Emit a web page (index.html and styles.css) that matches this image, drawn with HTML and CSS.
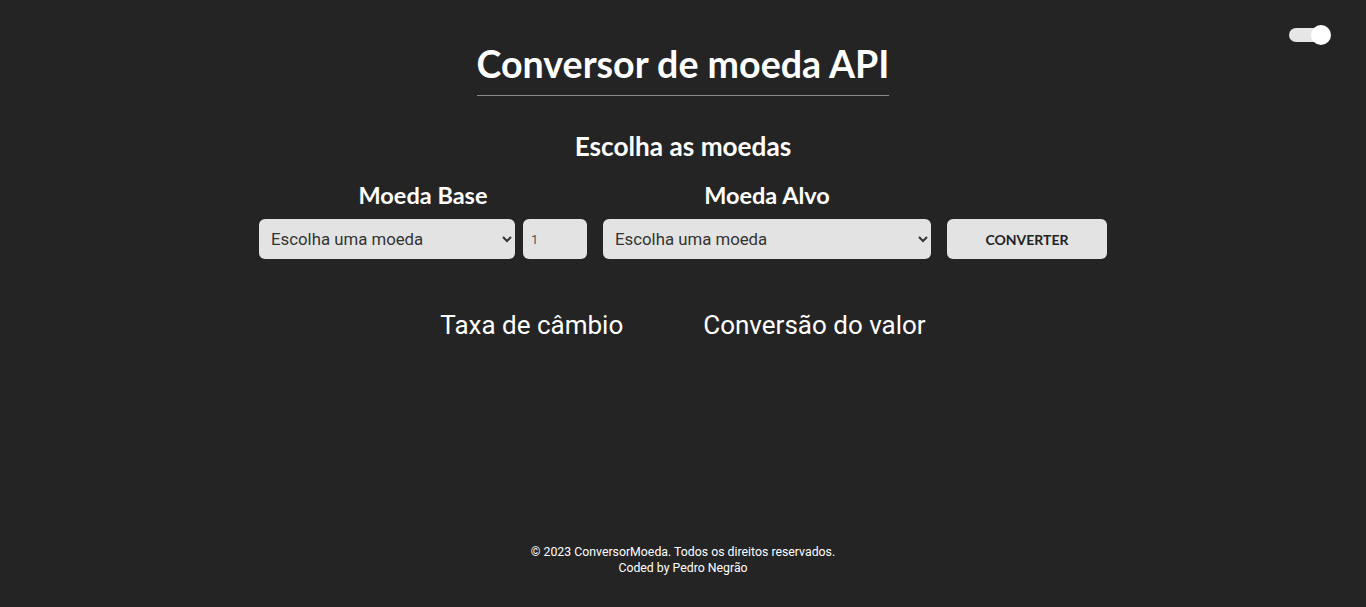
FILE: index.html
```html
<!DOCTYPE html>
<html lang="pt-BR">
<head>
<meta charset="utf-8">
<title>Conversor de moeda API</title>
<link rel="stylesheet" href="styles.css">
</head>
<body>
<div class="page">
  <div class="toggle-bar">
    <label class="toggle"><span class="track"></span><span class="knob"></span></label>
  </div>
  <header class="header">
    <h1 class="title">Conversor de moeda API</h1>
  </header>
  <main class="main">
    <h2 class="subtitle">Escolha as moedas</h2>
    <div class="form">
      <div class="group">
        <h3 class="label">Moeda Base</h3>
        <div class="row">
          <select class="select select-base"><option>Escolha uma moeda</option></select>
          <input class="amount" type="number" value="1">
        </div>
      </div>
      <div class="group">
        <h3 class="label">Moeda Alvo</h3>
        <div class="row">
          <select class="select select-target"><option>Escolha uma moeda</option></select>
        </div>
      </div>
      <div class="group group-btn">
        <button class="btn">CONVERTER</button>
      </div>
    </div>
    <div class="results">
      <p class="result">Taxa de câmbio</p>
      <p class="result">Conversão do valor</p>
    </div>
  </main>
  <footer class="footer">
    <p>© 2023 ConversorMoeda. Todos os direitos reservados.</p>
    <p>Coded by Pedro Negrão</p>
  </footer>
</div>
</body>
</html>
```
FILE: styles.css
```css
* { box-sizing: border-box; }
html, body { margin: 0; padding: 0; }
body {
  background: #242424;
  color: #fff;
  font-family: Roboto, "Liberation Sans", sans-serif;
  height: 607px;
  overflow: hidden;
}
.page {
  display: flex;
  flex-direction: column;
  align-items: center;
  height: 607px;
  position: relative;
}
.toggle-bar {
  position: absolute;
  top: 25px;
  right: 35px;
}
.toggle {
  display: block;
  position: relative;
  width: 42px;
  height: 20px;
}
.track {
  position: absolute;
  left: 0;
  top: 3px;
  width: 36px;
  height: 14px;
  border-radius: 7px;
  background: #e6e6e6;
}
.knob {
  position: absolute;
  right: 0;
  top: 0;
  width: 20px;
  height: 20px;
  border-radius: 50%;
  background: #fff;
}
.header { padding-top: 42px; }
.title {
  margin: 0;
  font-family: Lato, "Open Sans", sans-serif;
  font-weight: 700;
  font-size: 37.6px;
  line-height: 44px;
  padding-bottom: 9px;
  border-bottom: 1px solid #8a8a8a;
}
.main {
  display: flex;
  flex-direction: column;
  align-items: center;
}
.subtitle {
  margin: 35px 0 0;
  font-family: Lato, sans-serif;
  font-weight: 700;
  font-size: 26.2px;
  line-height: 30px;
}
.form {
  display: flex;
  align-items: flex-end;
  gap: 16px;
  margin-top: 20px;
}
.group {
  display: flex;
  flex-direction: column;
  align-items: center;
}
.label {
  margin: 0 0 10px;
  font-family: Lato, sans-serif;
  font-weight: 700;
  font-size: 23.5px;
  line-height: 28px;
}
.row { display: flex; gap: 8px; }
.select, .amount, .btn {
  height: 40px;
  border: none;
  border-radius: 6px;
  background: #e3e3e3;
  color: #333;
  font-family: Roboto, sans-serif;
}
.select {
  font-size: 16.8px;
  padding: 0 8px;
}
.select-base { width: 256px; }
.select-target { width: 328px; }
.amount {
  width: 64px;
  font-size: 13px;
  padding: 0 8px;
  color: #555;
}
.amount::-webkit-inner-spin-button { -webkit-appearance: none; }
.btn {
  width: 160px;
  font-family: Lato, sans-serif;
  font-weight: 700;
  font-size: 14px;
  color: #222;
}
.results {
  display: flex;
  gap: 80px;
  margin-top: 51px;
}
.result {
  margin: 0;
  font-size: 26px;
  line-height: 30px;
}
.footer {
  margin-top: auto;
  padding-bottom: 31px;
  text-align: center;
  font-size: 12.3px;
  line-height: 16px;
}
.footer p { margin: 0; }
```
